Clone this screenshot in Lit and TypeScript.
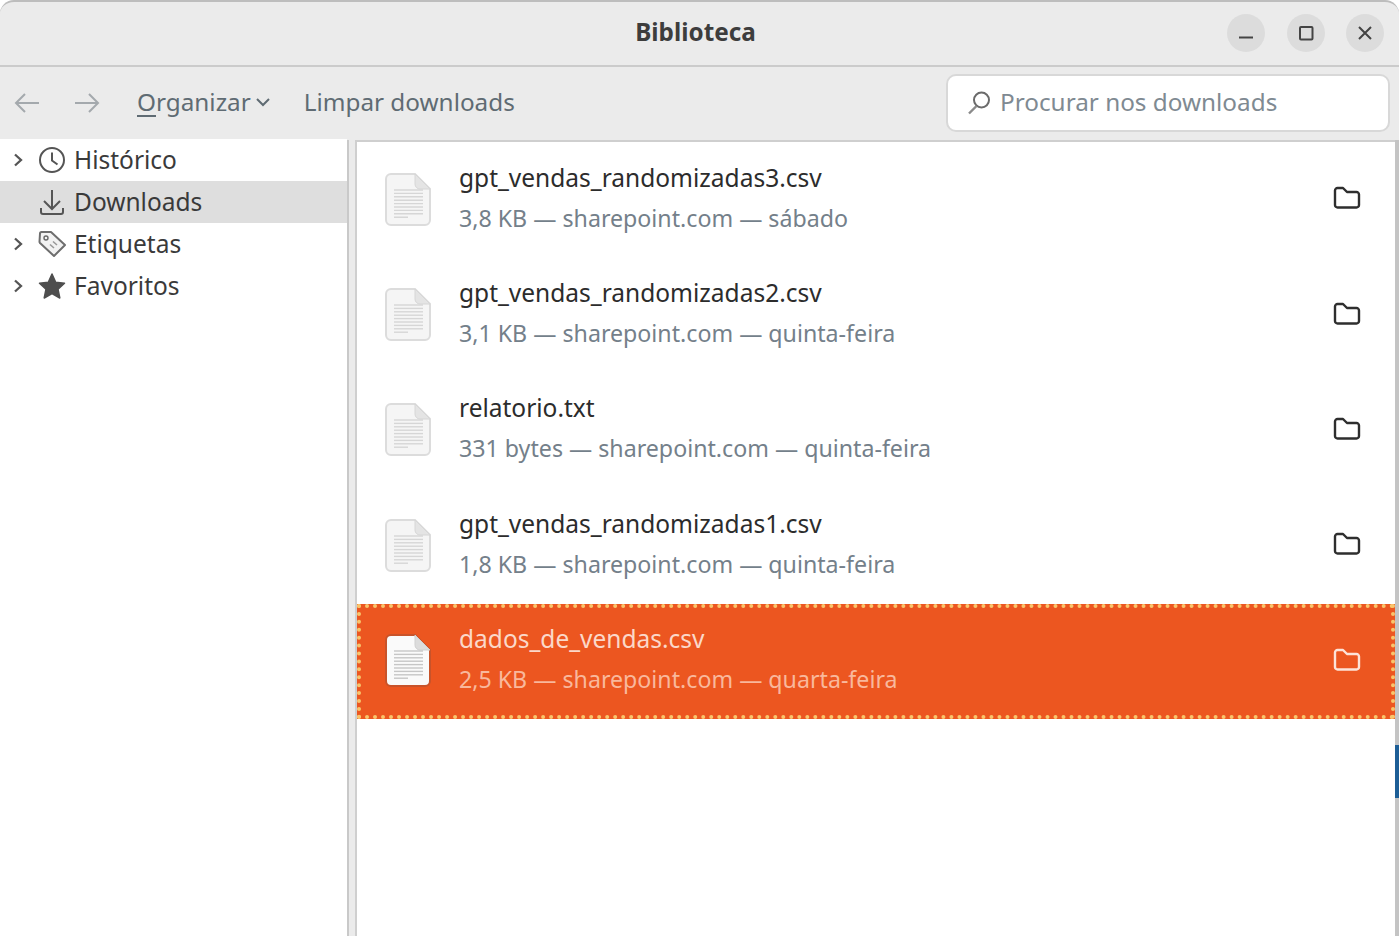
import { LitElement, html, css, svg } from "lit";
import { customElement } from "lit/decorators.js";

const rows = [
  { name: "gpt_vendas_randomizadas3.csv", sub: "3,8 KB — sharepoint.com — sábado" },
  { name: "gpt_vendas_randomizadas2.csv", sub: "3,1 KB — sharepoint.com — quinta-feira" },
  { name: "relatorio.txt", sub: "331 bytes — sharepoint.com — quinta-feira" },
  { name: "gpt_vendas_randomizadas1.csv", sub: "1,8 KB — sharepoint.com — quinta-feira" },
  { name: "dados_de_vendas.csv", sub: "2,5 KB — sharepoint.com — quarta-feira", selected: true },
];

const chevron = html`<svg class="chev" width="12" height="16" viewBox="0 0 12 16"><path d="M3 2.500l6 5.500-6 5.500" fill="none" stroke="#555" stroke-width="2.300"/></svg>`;

const fileIcon = html`<svg class="file" width="46" height="53" viewBox="0 0 46 53">
  <path class="sheet" d="M6 1h24l15 15v31a5 5 0 0 1-5 5h-34a5 5 0 0 1-5-5v-41a5 5 0 0 1 5-5z"/>
  <path class="fold" d="M30 1v10a5 5 0 0 0 5 5h10z"/>
  ${[17, 20.400, 23.800, 27.200, 30.600, 34, 37.400, 40.800].map(
    (y) => svg`<path class="ln" d="M9 ${y}h29"/>`
  )}
  <path class="ln" d="M9 44.200h14"/>
</svg>`;

const folderIcon = html`<svg class="folder" width="28" height="24" viewBox="0 0 28 24"><path d="M2 4.500a2.500 2.500 0 0 1 2.500-2.500h5.500l4 4h9.500a2.500 2.500 0 0 1 2.500 2.500v10.500a2.500 2.500 0 0 1-2.500 2.500h-19a2.500 2.500 0 0 1-2.500-2.500z" fill="none" stroke="currentColor" stroke-width="2.400" stroke-linejoin="round"/></svg>`;

@customElement("app-root")
export class AppRoot extends LitElement {
  static styles = css`
    :host { display: block; width: 1399px; height: 936px; overflow: hidden; background: #fff; font-family: "Noto Sans", sans-serif; }
    .win { height: 936px; display: flex; flex-direction: column; background: #ebebeb; border-radius: 14px 14px 0 0; border-top: 2px solid #bdbdbd; box-sizing: border-box; overflow: hidden; }
    .title { height: 65px; flex: none; box-sizing: border-box; display: flex; align-items: center; justify-content: center; position: relative; border-bottom: 2px solid #cbcbcb; padding: 0 8px 4px 0; }
    .title h1 { margin: 0; font-size: 24.300px; font-weight: 700; color: #3d3d3d; }
    .wbtns { position: absolute; right: 15px; top: 12px; display: flex; gap: 21.500px; }
    .wbtn { width: 38px; height: 38px; border-radius: 50%; background: #dcdcdc; display: flex; align-items: center; justify-content: center; }
    .toolbar { height: 73px; flex: none; box-sizing: border-box; display: flex; align-items: center; color: #5f6b73; font-size: 24.300px; padding: 0 9px 2px 0; }
    .nav { display: flex; gap: 34px; margin-left: 14px; }
    .organize { margin-left: 37px; display: flex; align-items: center; gap: 5px; padding-bottom: 2px; }
    .organize u { text-underline-offset: 4px; text-decoration-thickness: 2px; }
    .clear { margin-left: 34px; padding-bottom: 2px; }
    .search { margin-left: auto; width: 444px; height: 58px; box-sizing: border-box; background: #fff; border: 2px solid #d8d8d8; border-radius: 10px; display: flex; align-items: center; padding-left: 19px; gap: 9px; color: #7f8a92; }
    .search span { padding-bottom: 2px; }
    .main { flex: 1; display: flex; min-height: 0; background: #fff; }
    .side { width: 347px; flex: none; background: #fff; color: #3a3a3a; font-size: 24.500px; margin-top: -1px; position: relative; }
    .sitem { height: 42px; display: flex; align-items: center; }
    .sitem.on { background: #dedede; }
    .lbl { padding-bottom: 1px; }
    .chevslot { width: 38px; flex: none; display: flex; padding-left: 12px; box-sizing: border-box; }
    .sicon { width: 28px; height: 28px; flex: none; margin-right: 8px; }
    .split { width: 10px; flex: none; box-sizing: border-box; background: #ebebeb; border-left: 2px solid #c9c9c9; border-right: 2px solid #cfcfcf; }
    .list { flex: 1; min-width: 0; display: flex; flex-direction: column; border-top: 2px solid #cfcfcf; background: #fff; }
    .row { height: 115.400px; flex: none; box-sizing: border-box; display: flex; align-items: center; padding: 0 34px 4px 28px; color: #2c2c2c; }
    .row.sel { background: #ec5620; color: #fff; outline: 4px dotted #f9c56c; outline-offset: -4px; }
    .file { flex: none; margin-top: 3px; }
    .sheet { fill: #f5f5f5; stroke: #dcdcdc; stroke-width: 2; }
    .fold { fill: #e4e4e4; stroke: #d6d6d6; stroke-width: 1; }
    .ln { stroke: #d6d6d6; stroke-width: 1.400; }
    .sel .sheet { fill: #fafafa; stroke: #c8532a; }
    .sel .fold { fill: #dcdcdc; stroke: #d0d0d0; }
    .sel .ln { stroke: #c6c6c6; }
    .txt { margin-left: 28px; flex: 1; min-width: 0; display: flex; flex-direction: column; gap: 6px; }
    .name { font-size: 24.500px; line-height: 34px; }
    .sub { font-size: 23.200px; line-height: 34px; color: #74808a; }
    .sel .sub { color: #f9b89c; }
    .sel .name { color: #fbd8c9; }
    .folder { flex: none; color: #2e2e2e; margin-top: 1px; }
    .sel .folder { color: #fde3d8; }
    .edge { width: 4px; flex: none; display: flex; flex-direction: column; background: #c4c4c4; }
    .edge i { display: block; height: 53px; margin-top: 605px; background: #1d5e96; }
  `;

  render() {
    return html`<div class="win">
      <div class="title">
        <h1>Biblioteca</h1>
        <div class="wbtns">
          <div class="wbtn"><svg width="18" height="18" viewBox="0 0 18 18"><path d="M2 13.500h14" stroke="#444" stroke-width="2"/></svg></div>
          <div class="wbtn"><svg width="18" height="18" viewBox="0 0 18 18"><rect x="3" y="3" width="12.500" height="12.500" rx="1" fill="none" stroke="#444" stroke-width="2"/></svg></div>
          <div class="wbtn"><svg width="18" height="18" viewBox="0 0 18 18"><path d="M3 3l12 12M15 3L3 15" stroke="#444" stroke-width="2"/></svg></div>
        </div>
      </div>
      <div class="toolbar">
        <div class="nav">
          <svg width="26" height="24" viewBox="0 0 26 24"><path d="M25 12H2M11 3l-9 9 9 9" fill="none" stroke="#a4a9ad" stroke-width="2"/></svg>
          <svg width="26" height="24" viewBox="0 0 26 24"><path d="M1 12h23M15 3l9 9-9 9" fill="none" stroke="#a4a9ad" stroke-width="2"/></svg>
        </div>
        <div class="organize"><span><u>O</u>rganizar</span><svg width="14" height="10" viewBox="0 0 14 10"><path d="M1 2l6 6 6-6" fill="none" stroke="#5f6b73" stroke-width="2"/></svg></div>
        <div class="clear">Limpar downloads</div>
        <div class="search">
          <svg width="24" height="24" viewBox="0 0 24 24"><circle cx="14.500" cy="9" r="7.500" fill="none" stroke="#6b6b6b" stroke-width="2"/><path d="M9.500 15l-7.500 7.500" stroke="#8b8b8b" stroke-width="2.400"/></svg>
          <span>Procurar nos downloads</span>
        </div>
      </div>
      <div class="main">
        <div class="side">
          <div class="sitem"><div class="chevslot">${chevron}</div>
            <svg class="sicon" viewBox="0 0 28 28"><circle cx="14" cy="14" r="12" fill="none" stroke="#555" stroke-width="2"/><path d="M14 6.500v8l5.500 4" fill="none" stroke="#555" stroke-width="2"/></svg><span class="lbl">Histórico</span></div>
          <div class="sitem on"><div class="chevslot"></div>
            <svg class="sicon" viewBox="0 0 28 28"><path d="M14 2v18M6 13l8 8 8-8" fill="none" stroke="#555" stroke-width="2"/><path d="M3 20v4a2 2 0 0 0 2 2h18a2 2 0 0 0 2-2v-4" fill="none" stroke="#555" stroke-width="2"/></svg><span class="lbl">Downloads</span></div>
          <div class="sitem"><div class="chevslot">${chevron}</div>
            <svg class="sicon" viewBox="0 0 28 28"><path d="M2 3.500a1.500 1.500 0 0 1 1.500-1.500h9.500l14 13-11 11-14-13a2 2 0 0 1-.5-1.500z" fill="#f2f2f2" stroke="#6e6e6e" stroke-width="2" stroke-linejoin="round"/><circle cx="8" cy="8" r="2" fill="none" stroke="#666" stroke-width="1.400"/><path d="M12 14.500l4 3.500M15 11.500l4 3.500" stroke="#999" stroke-width="1.600"/></svg><span class="lbl">Etiquetas</span></div>
          <div class="sitem"><div class="chevslot">${chevron}</div>
            <svg class="sicon" viewBox="0 0 28 28"><path d="M14 2l3.700 8.200 8.800 1-6.500 6 1.800 8.800-7.800-4.500-7.800 4.500 1.800-8.800-6.500-6 8.800-1z" fill="#4e4e4e" stroke="#4e4e4e" stroke-width="1.500" stroke-linejoin="round"/></svg><span class="lbl">Favoritos</span></div>
        </div>
        <div class="split"></div>
        <div class="list">
          ${rows.map(
            (r) => html`<div class="row ${r.selected ? "sel" : ""}">
              ${fileIcon}
              <div class="txt"><div class="name">${r.name}</div><div class="sub">${r.sub}</div></div>
              ${folderIcon}
            </div>`
          )}
        </div>
        <div class="edge"><i></i></div>
      </div>
    </div>`;
  }
}
